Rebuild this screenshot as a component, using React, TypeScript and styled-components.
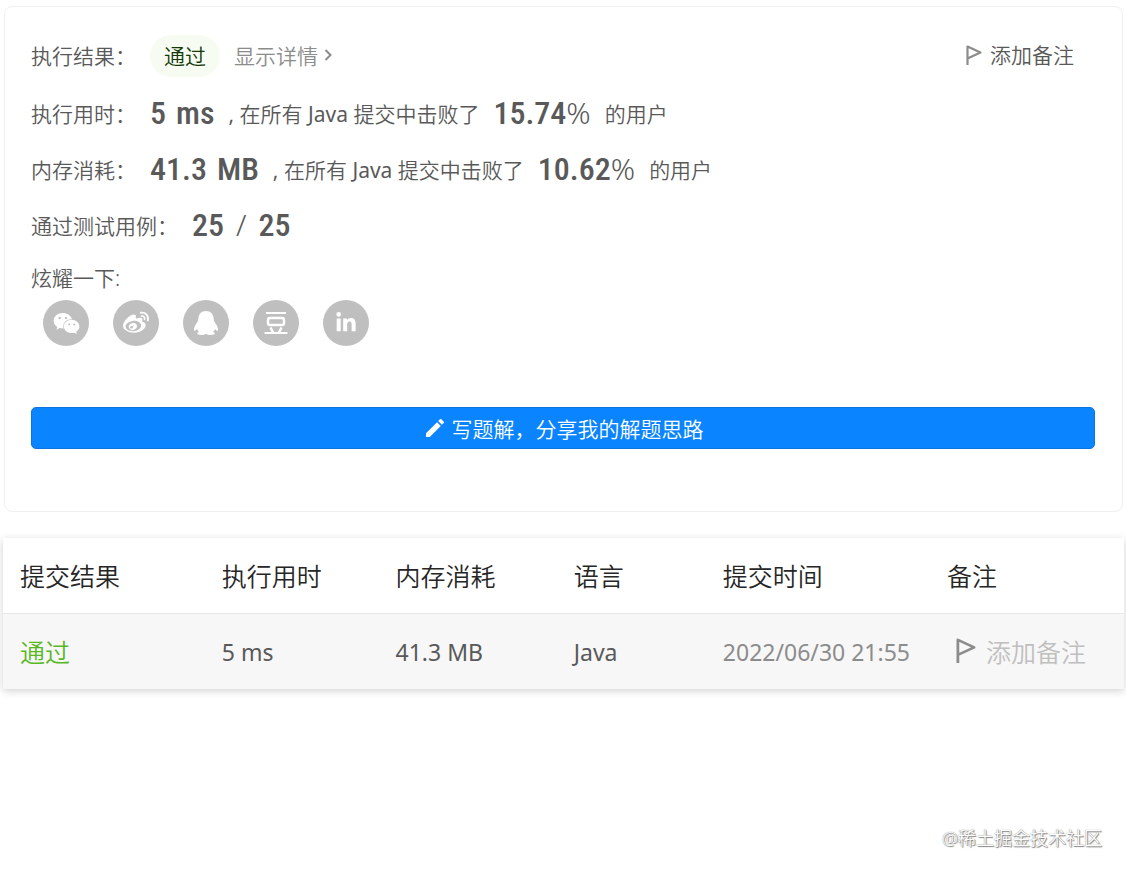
import React from "react";
import styled, { createGlobalStyle } from "styled-components";
import { FaWeixin, FaWeibo, FaLinkedinIn } from "react-icons/fa";
import { MdEdit } from "react-icons/md";

const Global = createGlobalStyle`
  * { box-sizing: border-box; }
  body {
    margin: 0;
    background: #fff;
    color: #595959;
    font-family: "Noto Sans", "Noto Sans CJK SC", sans-serif;
    font-weight: 350;
  }
  button {
    font: inherit;
    color: inherit;
    padding: 0;
    border: 0;
    background: none;
    cursor: pointer;
  }
  a { color: inherit; text-decoration: none; }
`;

const Page = styled.main`
  display: flex;
  flex-direction: column;
  gap: 26px;
  padding: 6px 2px 0 3px;
`;

const Card = styled.section`
  margin: 0 1px;
  padding: 21px 27px 62px 26px;
  border: 1px solid #f0f0f0;
  border-radius: 8px;
  font-size: 21px;
`;

const Row = styled.div`
  display: flex;
  align-items: flex-start;
  height: 56px;
  line-height: 56px;
  white-space: nowrap;
`;

const ResultRow = styled(Row)`
  align-items: center;
  margin-bottom: 2px;
`;

const Label = styled.span`
  min-width: 119px;
  padding-right: 14px;
`;

const Badge = styled.span`
  padding: 0 14px;
  border-radius: 21px;
  background: #f6fcf1;
  color: #14380a;
  line-height: 42px;
`;

const Details = styled.a`
  display: flex;
  align-items: center;
  gap: 6px;
  margin-left: 14px;
  color: #8c8c8c;
`;

const NoteButton = styled.button<{ $faded?: boolean }>`
  display: inline-flex;
  align-items: center;
  gap: ${(p) => (p.$faded ? 10 : 8)}px;
  margin-left: ${(p) => (p.$faded ? 9 : 0)}px;
  color: ${(p) => (p.$faded ? "#bfbfbf" : "#595959")};
  svg { color: #8c8c8c; }
`;

const RowEnd = styled.div`
  margin-left: auto;
  padding-right: 21px;
`;

const Figure = styled.strong<{ $gap?: number }>`
  display: flex;
  align-items: baseline;
  gap: ${(p) => p.$gap || 0}px;
  font-family: "Roboto Condensed", Roboto, sans-serif;
  font-size: 32px;
  font-weight: 500;
  line-height: 54px;
`;

const Thin = styled.span`
  font-family: "Noto Sans", sans-serif;
  font-size: 30px;
  font-weight: 350;
`;

const Note = styled.span`
  padding: 0 14px;
  font-size: 21px;
`;

const Latin = styled.span`
  font-weight: 400;
`;

const ShareLabel = styled.div`
  margin-top: 2px;
  line-height: 44px;
`;

const ShareList = styled.div`
  display: flex;
  gap: 24px;
  padding-left: 12px;
`;

const ShareButton = styled.button`
  display: flex;
  align-items: center;
  justify-content: center;
  width: 46px;
  height: 46px;
  border-radius: 50%;
  background: #bfbfbf;
  color: #fff;
`;

const WriteButton = styled.button`
  display: flex;
  align-items: center;
  justify-content: center;
  gap: 5px;
  width: 100%;
  height: 42px;
  margin-top: 61px;
  border: 1px solid #0b74de;
  border-radius: 5px;
  background: #0a84ff;
  color: #fff;
`;

const Table = styled.table`
  width: 100%;
  table-layout: fixed;
  border-collapse: collapse;
  font-size: 25px;
  text-align: left;
  white-space: nowrap;
  box-shadow: 0 2px 8px rgba(0, 0, 0, 0.18);
`;

const Th = styled.th<{ $w: number }>`
  width: ${(p) => p.$w}%;
  height: 75px;
  padding: 0 0 0 17px;
  color: #262626;
  font-weight: 350;
`;

const Td = styled.td<{ $tone?: string }>`
  height: 76px;
  padding: 0 0 0 17px;
  border-top: 1px solid #e8e8e8;
  background: #f7f7f7;
  color: ${(p) => p.$tone || "#595959"};
`;

const Value = styled.span`
  font-size: 23px;
  font-weight: 400;
`;

const Watermark = styled.footer`
  margin-top: 108px;
  padding-right: 22px;
  font-size: 18px;
  line-height: 30px;
  text-align: right;
  color: #fff;
  text-shadow: 0 0 1px #666, 1px 1px 1px #888;
`;

const Flag = ({ size }: { size: number }) => (
  <svg width={size * 0.8} height={size} viewBox="0 0 16 20" fill="none" stroke="currentColor" strokeWidth="2.200" aria-hidden="true">
    <path d="M1.500 20V1.500L14.500 7.500L1.500 13.500" strokeLinejoin="round" />
  </svg>
);

const Penguin = () => (
  <svg width="26" height="26" viewBox="0 0 26 26" fill="currentColor" aria-hidden="true">
    <path d="M13 1C8.200 1 5.300 4.500 5.300 9.200C5.300 10.300 4.900 11.200 4.200 12.300C2.400 15 1 17.500 1 19.500C1 20.600 1.400 21 2 20.800C2.700 20.500 3.500 19.600 4 18.900C4.400 20.200 5.100 21.200 6.100 22C4.800 22.300 4.100 22.900 4.100 23.600C4.100 24.700 5.800 25 8.300 25C10.300 25 11.700 24.600 12.400 23.900H13.600C14.300 24.600 15.700 25 17.700 25C20.200 25 21.900 24.700 21.900 23.600C21.900 22.900 21.200 22.300 19.900 22C20.900 21.200 21.600 20.200 22 18.900C22.500 19.600 23.300 20.500 24 20.800C24.600 21 25 20.600 25 19.500C25 17.500 23.600 15 21.800 12.300C21.100 11.200 20.700 10.300 20.700 9.200C20.700 4.500 17.800 1 13 1Z" />
  </svg>
);

const Douban = () => (
  <svg width="24" height="24" viewBox="0 0 24 24" fill="none" stroke="currentColor" strokeWidth="2" aria-hidden="true">
    <path d="M2 2H22M0.500 22H23.500" />
    <path d="M6.500 16.500L9 21.500M17.500 16.500L15 21.500" strokeWidth="2.500" />
    <rect x="4" y="7" width="16" height="7" rx="2" strokeWidth="2.500" />
  </svg>
);

const Chevron = () => (
  <svg width="8" height="14" viewBox="0 0 8 14" fill="none" stroke="currentColor" strokeWidth="2" aria-hidden="true">
    <path d="M1.500 1L6.500 6L1.500 11" />
  </svg>
);

const shares = [
  { name: "微信", icon: <FaWeixin size={27} /> },
  { name: "微博", icon: <FaWeibo size={26} /> },
  { name: "QQ", icon: <Penguin /> },
  { name: "豆瓣", icon: <Douban /> },
  { name: "LinkedIn", icon: <FaLinkedinIn size={22} /> },
];

const columns = [
  { title: "提交结果", width: 18 },
  { title: "执行用时", width: 15.5 },
  { title: "内存消耗", width: 15.9 },
  { title: "语言", width: 13.3 },
  { title: "提交时间", width: 20 },
  { title: "备注", width: 17.3 },
];

type MetricProps = { label: string; value: string; unit: string; percent: string };

const Metric = ({ label, value, unit, percent }: MetricProps) => (
  <Row>
    <Label>{label}</Label>
    <Figure $gap={10}>
      <span>{value}</span>
      <span>{unit}</span>
    </Figure>
    <Note>
      <Latin>, </Latin>在所有<Latin> Java </Latin>提交中击败了
    </Note>
    <Figure>
      {percent}
      <Thin>%</Thin>
    </Figure>
    <Note>的用户</Note>
  </Row>
);

export default function App() {
  return (
    <>
      <Global />
      <Page>
        <Card>
          <ResultRow>
            <Label>执行结果：</Label>
            <Badge>通过</Badge>
            <Details href="#details">
              显示详情
              <Chevron />
            </Details>
            <RowEnd>
              <NoteButton type="button">
                <Flag size={20} />
                添加备注
              </NoteButton>
            </RowEnd>
          </ResultRow>
          <Metric label="执行用时：" value="5" unit="ms" percent="15.74" />
          <Metric label="内存消耗：" value="41.3" unit="MB" percent="10.62" />
          <Row>
            <Label>通过测试用例：</Label>
            <Figure $gap={12}>
              <span>25</span>
              <Thin>/</Thin>
              <span>25</span>
            </Figure>
          </Row>
          <ShareLabel>炫耀一下:</ShareLabel>
          <ShareList>
            {shares.map((s) => (
              <ShareButton key={s.name} type="button" aria-label={s.name}>
                {s.icon}
              </ShareButton>
            ))}
          </ShareList>
          <WriteButton type="button">
            <MdEdit size={24} />
            写题解，分享我的解题思路
          </WriteButton>
        </Card>
        <Table>
          <thead>
            <tr>
              {columns.map((c) => (
                <Th key={c.title} $w={c.width}>
                  {c.title}
                </Th>
              ))}
            </tr>
          </thead>
          <tbody>
            <tr>
              <Td $tone="#5ab726">通过</Td>
              <Td><Value>5 ms</Value></Td>
              <Td><Value>41.3 MB</Value></Td>
              <Td><Value>Java</Value></Td>
              <Td $tone="#8c8c8c"><Value>2022/06/30 21:55</Value></Td>
              <Td>
                <NoteButton type="button" $faded>
                  <Flag size={25} />
                  添加备注
                </NoteButton>
              </Td>
            </tr>
          </tbody>
        </Table>
        <Watermark>@稀土掘金技术社区</Watermark>
      </Page>
    </>
  );
}
